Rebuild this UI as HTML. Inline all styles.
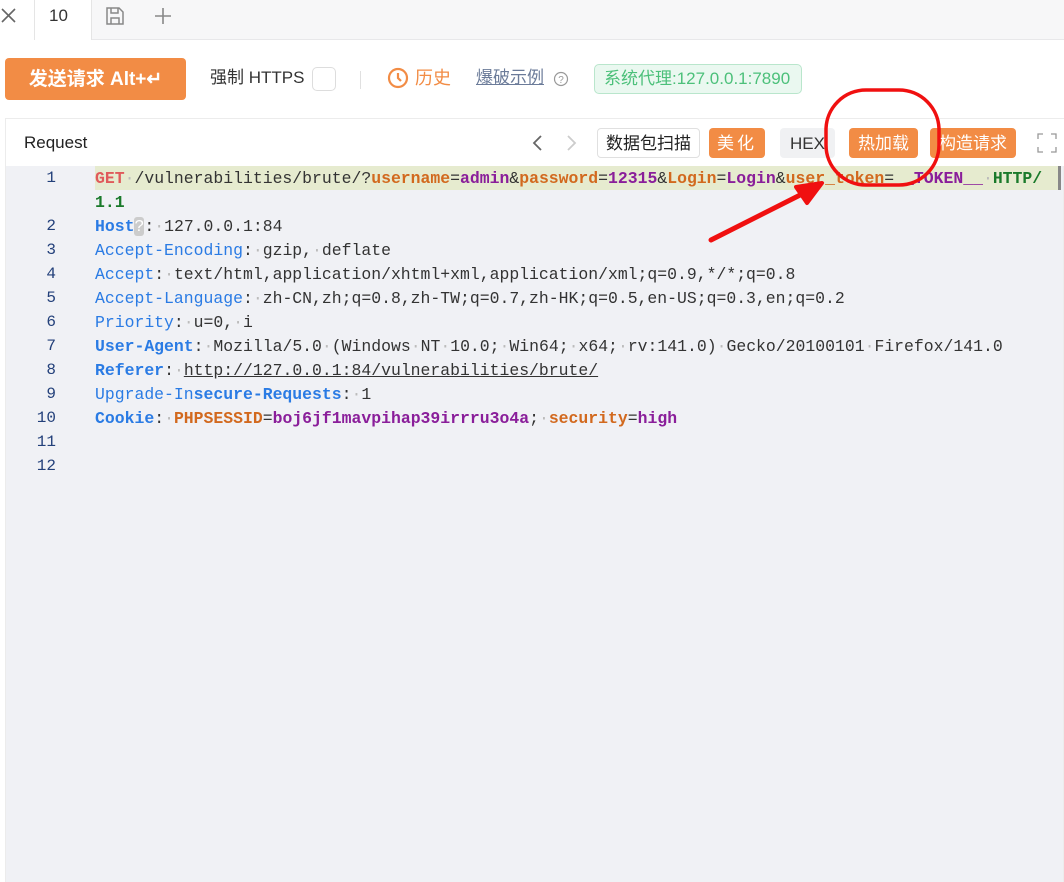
<!DOCTYPE html>
<html><head><meta charset="utf-8"><style>
*{margin:0;padding:0;box-sizing:border-box}
body{width:1064px;height:882px;background:#fff;font-family:"Liberation Sans","Noto Sans CJK SC",sans-serif;position:relative;overflow:hidden;color:#333}
.abs{position:absolute}
.tabbar{left:0;top:0;width:1064px;height:40px;background:#f7f7f8;border-bottom:1px solid #e8e8ea}
.btn{position:absolute;border-radius:4px;font-size:17px;display:flex;align-items:center;justify-content:center;line-height:1}
.og{background:#f28c45;color:#fff}
.code{font-family:"Liberation Mono",monospace;font-size:16.45px;line-height:24px;white-space:pre;color:#333}
.ln{position:absolute;left:20px;width:36px;text-align:right;font-family:"Liberation Mono",monospace;font-size:16px;color:#23407a}
.k{color:#2a7be4}.kb{color:#2a7be4;font-weight:bold}.o{color:#d2691e;font-weight:bold}.p{color:#8a1e9a;font-weight:bold}.r{color:#e05a5a;font-weight:bold}.g{color:#1a7a2a;font-weight:bold}.d{color:#bbb}
</style></head><body>
<div class="abs tabbar"></div>
<div class="abs" style="left:0;top:0;width:34px;height:40px;background:#fff"></div>
<div class="abs" style="left:34px;top:0;width:58px;height:40px;background:#fff;border-left:1px solid #e5e5e5;border-right:1px solid #e5e5e5"></div>
<svg class="abs" style="left:0;top:7px" width="18" height="18"><path d="M2 2L15 15M15 2L2 15" stroke="#666" stroke-width="1.6"/></svg>
<div class="abs" style="left:49px;top:6px;font-size:17px;color:#333">10</div>
<svg class="abs" style="left:105px;top:6px" width="20" height="20"><path d="M2 2H14L18 6V18H2Z M6 2V7H13V2 M6 18V12H14V18" fill="none" stroke="#888" stroke-width="1.5"/></svg>
<svg class="abs" style="left:153px;top:6px" width="20" height="20"><path d="M10 2V18M2 10H18" stroke="#888" stroke-width="1.6"/></svg>

<div class="btn og" style="left:5px;top:58px;width:181px;height:42px;font-weight:bold;font-size:19px">发送请求 Alt+↵</div>
<div class="abs" style="left:210px;top:68px;font-size:17px;line-height:20px;color:#333">强制 HTTPS</div>
<div class="abs" style="left:312px;top:67px;width:24px;height:24px;border:1px solid #ddd;border-radius:5px"></div>
<div class="abs" style="left:360px;top:71px;width:1px;height:18px;background:#e0e0e0"></div>
<svg class="abs" style="left:387px;top:67px" width="22" height="22"><circle cx="11" cy="11" r="9" fill="none" stroke="#f28c45" stroke-width="2.2"/><path d="M11 6V11L14 14" fill="none" stroke="#f28c45" stroke-width="2.2"/></svg>
<div class="abs" style="left:415px;top:67px;font-size:18px;line-height:22px;color:#f28c45">历史</div>
<div class="abs" style="left:476px;top:68px;font-size:17px;line-height:20px;color:#6b7b99;text-decoration:underline">爆破示例</div>
<svg class="abs" style="left:553px;top:71px" width="16" height="16"><circle cx="8" cy="8" r="6.5" fill="none" stroke="#999" stroke-width="1.2"/><text x="8" y="12" font-size="10" text-anchor="middle" fill="#999">?</text></svg>
<div class="abs" style="left:594px;top:64px;width:208px;height:30px;border:1px solid #b9e6cc;background:#eaf8f0;border-radius:5px;color:#4cc07a;font-size:17px;line-height:28px;padding-left:9px">系统代理:127.0.0.1:7890</div>

<div class="abs" style="left:5px;top:118px;width:1059px;height:764px;border:1px solid #ececec;border-bottom:none;background:#f0f1f5"></div>
<div class="abs" style="left:6px;top:119px;width:1058px;height:47px;background:#fff"></div>
<div class="abs" style="left:24px;top:133px;font-size:17px;color:#222">Request</div>
<svg class="abs" style="left:529px;top:133px" width="50" height="20"><path d="M12 3L5 10L12 17" fill="none" stroke="#666" stroke-width="1.8"/><path d="M39 3L46 10L39 17" fill="none" stroke="#ccc" stroke-width="1.8"/></svg>
<div class="btn" style="left:597px;top:128px;width:103px;height:30px;border:1px solid #e0e0e0;background:#fff;color:#222">数据包扫描</div>
<div class="btn og" style="left:709px;top:128px;width:56px;height:30px;letter-spacing:3px">美化</div>
<div class="btn" style="left:780px;top:128px;width:55px;height:30px;background:#f0f1f3;color:#333">HEX</div>
<div class="btn og" style="left:849px;top:128px;width:69px;height:30px">热加载</div>
<div class="btn og" style="left:930px;top:128px;width:86px;height:30px">构造请求</div>
<svg class="abs" style="left:1037px;top:133px" width="20" height="20"><path d="M1 6V1H6M14 1H19V6M19 14V19H14M6 19H1V14" fill="none" stroke="#999" stroke-width="1.3"/></svg>

<div class="abs" style="left:95px;top:166px;width:963px;height:24px;background:#e6ebcf"></div>
<div class="abs" style="left:1058px;top:166px;width:3px;height:24px;background:#888"></div>
<div class="ln" style="top:169px">1</div><div class="ln" style="top:217px">2</div><div class="ln" style="top:241px">3</div><div class="ln" style="top:265px">4</div><div class="ln" style="top:289px">5</div><div class="ln" style="top:313px">6</div><div class="ln" style="top:337px">7</div><div class="ln" style="top:361px">8</div><div class="ln" style="top:385px">9</div><div class="ln" style="top:409px">10</div><div class="ln" style="top:433px">11</div><div class="ln" style="top:457px">12</div>
<div class="abs code" style="left:95px;top:167px"><span class="r">GET</span><span class="d">·</span>/vulnerabilities/brute/?<span class="o">username</span>=<span class="p">admin</span>&amp;<span class="o">password</span>=<span class="p">12315</span>&amp;<span class="o">Login</span>=<span class="p">Login</span>&amp;<span class="o">user_token</span>=<span class="p">__TOKEN__</span><span class="d">·</span><span class="g">HTTP/</span>
<span class="g">1.1</span>
<span class="kb">Host</span><span style="background:#ccc;color:#fff;border-radius:3px">?</span>:<span class="d">·</span>127.0.0.1:84
<span class="k">Accept-Encoding</span>:<span class="d">·</span>gzip,<span class="d">·</span>deflate
<span class="k">Accept</span>:<span class="d">·</span>text/html,application/xhtml+xml,application/xml;q=0.9,*/*;q=0.8
<span class="k">Accept-Language</span>:<span class="d">·</span>zh-CN,zh;q=0.8,zh-TW;q=0.7,zh-HK;q=0.5,en-US;q=0.3,en;q=0.2
<span class="k">Priority</span>:<span class="d">·</span>u=0,<span class="d">·</span>i
<span class="kb">User-Agent</span>:<span class="d">·</span>Mozilla/5.0<span class="d">·</span>(Windows<span class="d">·</span>NT<span class="d">·</span>10.0;<span class="d">·</span>Win64;<span class="d">·</span>x64;<span class="d">·</span>rv:141.0)<span class="d">·</span>Gecko/20100101<span class="d">·</span>Firefox/141.0
<span class="kb">Referer</span>:<span class="d">·</span><span style="text-decoration:underline">http://127.0.0.1:84/vulnerabilities/brute/</span>
<span class="k">Upgrade-In</span><span class="kb">secure-Requests</span>:<span class="d">·</span>1
<span class="kb">Cookie</span>:<span class="d">·</span><span class="o">PHPSESSID</span>=<span class="p">boj6jf1mavpihap39irrru3o4a</span>;<span class="d">·</span><span class="o">security</span>=<span class="p">high</span></div>

<svg class="abs" style="left:0;top:0" width="1064" height="882"><rect x="826" y="90" width="113" height="95" rx="40" fill="none" stroke="#f01010" stroke-width="3.5"/><path d="M711 240L818 186" stroke="#f01010" stroke-width="5" stroke-linecap="round"/><path d="M822 183L796 187L807 203Z" fill="#f01010" stroke="#f01010" stroke-width="4" stroke-linejoin="round"/></svg>
</body></html>
